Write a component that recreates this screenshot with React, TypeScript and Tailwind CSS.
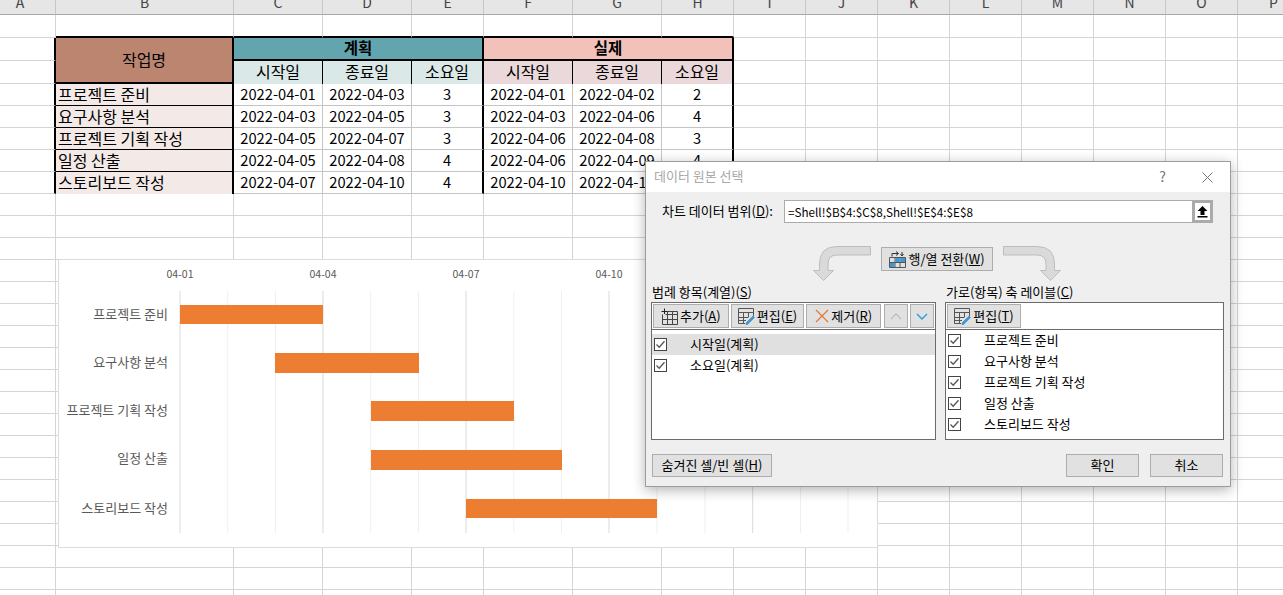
import type { ReactNode } from "react";

const columns = ["A", "B", "C", "D", "E", "F", "G", "H", "I", "J", "K", "L", "M", "N", "O", "P"];

const tasks = [
  { name: "프로젝트 준비", plan: ["2022-04-01", "2022-04-03", "3"], real: ["2022-04-01", "2022-04-02", "2"] },
  { name: "요구사항 분석", plan: ["2022-04-03", "2022-04-05", "3"], real: ["2022-04-03", "2022-04-06", "4"] },
  { name: "프로젝트 기획 작성", plan: ["2022-04-05", "2022-04-07", "3"], real: ["2022-04-06", "2022-04-08", "3"] },
  { name: "일정 산출", plan: ["2022-04-05", "2022-04-08", "4"], real: ["2022-04-06", "2022-04-09", "4"] },
  { name: "스토리보드 작성", plan: ["2022-04-07", "2022-04-10", "4"], real: ["2022-04-10", "2022-04-12", "4"] },
];

const bars = [
  { x: 180, w: 143, y: 305, h: 19, labelY: 319 },
  { x: 275, w: 144, y: 353, h: 20, labelY: 367 },
  { x: 371, w: 143, y: 401, h: 20, labelY: 415 },
  { x: 371, w: 191, y: 450, h: 20, labelY: 463 },
  { x: 466, w: 191, y: 499, h: 19, labelY: 513 },
];

const gridlines = [180, 227.7, 275.4, 323, 370.7, 418.4, 466, 513.8, 561.5, 609, 657, 705, 752.7, 800.5, 848];
const majorLines = [180, 323, 466, 609, 752.7];
const ticks = [
  { x: 180, label: "04-01" },
  { x: 323, label: "04-04" },
  { x: 466, label: "04-07" },
  { x: 609, label: "04-10" },
];

const blank = "border-r border-b border-[#d4d4d4]";
const inner = "border-r border-b border-[#c4c4c4] bg-white flex items-center justify-center text-[14.7px]";
const innerEnd = "border-r-2 border-r-black border-b border-b-[#c4c4c4] bg-white flex items-center justify-center text-[14.7px]";

function BlankCells({ count }: { count: number }) {
  return (
    <>
      {Array.from({ length: count }).map((_, i) => (
        <div key={i} className={blank} />
      ))}
    </>
  );
}

function SubHeader({ label, color, end }: { label: string; color: string; end?: boolean }) {
  return (
    <div
      className={`flex items-center justify-center pb-[4px] ${color} ${
        end ? "border-r-2 border-black" : "border-r border-black"
      }`}
    >
      {label}
    </div>
  );
}

function Sheet() {
  return (
    <div className="grid grid-cols-[56px_178px_89px_89px_72px_89px_89px_72px_72px_72px_72px_72px_72px_72px_72px_72px] grid-rows-[15px_23px_23px_23px_repeat(24,22px)] text-[16px] text-black">
      {columns.map((c, i) => (
        <div
          key={c}
          className={`overflow-hidden bg-[#e6e6e6] border-r border-r-[#c6c6c6] border-b border-b-[#a8a8a8] text-center text-[14px] leading-[14px] text-[#444] ${
            i === 0 ? "pr-[15px]" : ""
          }`}
        >
          <div className="-mt-[5px]">{c}</div>
        </div>
      ))}

      <div className={blank} />
      {columns.slice(1, 8).map((c) => (
        <div key={c} className="border-r border-r-[#d4d4d4] border-b-2 border-b-black" />
      ))}
      <BlankCells count={8} />

      <div className="border-b border-b-[#d4d4d4] border-r-2 border-r-black" />
      <div className="row-span-2 flex items-center justify-center border-r-2 border-b-2 border-black bg-[#bc8570] pb-[2px]">
        작업명
      </div>
      <div className="col-span-3 flex items-center justify-center border-r-2 border-b-2 border-black bg-[#62a5ae] pb-px text-[15.5px] font-bold">
        계획
      </div>
      <div className="col-span-3 flex items-center justify-center border-r-2 border-b-2 border-black bg-[#f2c2ba] pb-px text-[15.5px] font-bold">
        실제
      </div>
      <BlankCells count={8} />

      <div className="border-b border-b-[#d4d4d4] border-r-2 border-r-black" />
      <SubHeader label="시작일" color="bg-[#dae8e8]" />
      <SubHeader label="종료일" color="bg-[#dae8e8]" />
      <SubHeader label="소요일" color="bg-[#dae8e8]" end />
      <SubHeader label="시작일" color="bg-[#ead8da]" />
      <SubHeader label="종료일" color="bg-[#ead8da]" />
      <SubHeader label="소요일" color="bg-[#ead8da]" end />
      <BlankCells count={8} />

      {tasks.map((task, i) => (
        <div key={task.name} className="contents">
          <div className="border-b border-b-[#d4d4d4] border-r-2 border-r-black" />
          <div
            className={`flex items-center whitespace-nowrap border-r-2 border-r-black bg-[#f3eae7] pb-[2px] pl-[2px] ${
              i < tasks.length - 1 ? "border-b border-b-black" : ""
            }`}
          >
            {task.name}
          </div>
          <div className={inner}>{task.plan[0]}</div>
          <div className={inner}>{task.plan[1]}</div>
          <div className={innerEnd}>{task.plan[2]}</div>
          <div className={inner}>{task.real[0]}</div>
          <div className={inner}>{task.real[1]}</div>
          <div className={innerEnd}>{task.real[2]}</div>
          <BlankCells count={8} />
        </div>
      ))}

      <BlankCells count={16 * 19} />
    </div>
  );
}

function GanttChart() {
  return (
    <div className="absolute left-[58px] top-[259px] h-[289px] w-[820px] border border-[#dcdcdc] bg-white">
      <svg viewBox="59 260 818 287" width="818" height="287" className="block">
        {gridlines.map((x) => (
          <line
            key={x}
            x1={x}
            x2={x}
            y1={291}
            y2={533}
            stroke={majorLines.includes(x) ? "#d9d9d9" : "#efefef"}
            strokeWidth="1"
          />
        ))}
        {ticks.map((t) => (
          <text key={t.label} x={t.x} y={278} textAnchor="middle" fontSize="10.5" fill="#595959">
            {t.label}
          </text>
        ))}
        {bars.map((b, i) => (
          <g key={tasks[i].name}>
            <text x={168} y={b.labelY} textAnchor="end" fontSize="13" fill="#595959">
              {tasks[i].name}
            </text>
            <rect x={b.x} y={b.y} width={b.w} height={b.h} fill="#ed7d31" />
          </g>
        ))}
      </svg>
    </div>
  );
}

function BendArrow({ flip }: { flip?: boolean }) {
  return (
    <svg width="58" height="35" viewBox="0 0 58 35" className={flip ? "-scale-x-100" : ""}>
      <path
        d="M57.5 .5H24Q6.5 .5 6.5 18V24.5H.5L10.5 34.5L20.5 24.5H15V18Q15 9 24 9H57.5Z"
        fill="#d9dad9"
        stroke="#bdbdbd"
      />
    </svg>
  );
}

function TableAddIcon() {
  return (
    <svg width="17" height="17" viewBox="0 0 17 17" fill="none" stroke="#444">
      <path d="M4.5 3.5H16.5V16.5H1.5V6.5M1.5 11.5H16.5M6.5 3.5V16.5M11.5 3.5V16.5M4.5 6.5H16.5" />
      <path d="M3.5 .5V6M.5 3.5H6" stroke="#222" />
    </svg>
  );
}

function TableEditIcon() {
  return (
    <svg width="17" height="17" viewBox="0 0 17 17" fill="none">
      <path d="M.5 .5H15.5V8M.5 .5V15.5H7M.5 4.5H15.5M.5 9.5H10M.5 12.5H8M5.5 4.5V15.5M10.5 4.5V9.5" stroke="#555" />
      <path d="M8 15L15 8L16.5 9.5L9.5 16.5H8Z" fill="#3b9ad6" stroke="#2b86c4" strokeWidth=".6" />
    </svg>
  );
}

function SwapIcon() {
  return (
    <svg width="17" height="17" viewBox="0 0 17 17" fill="none">
      <path d="M.5 6.5H16.5V16.5H.5ZM.5 11.5H16.5M6 6.5V16.5M11 6.5V16.5" stroke="#555" />
      <rect x="6.5" y="7" width="4" height="4" fill="#3b9ad6" />
      <rect x="11.5" y="7" width="4.5" height="4" fill="#3b9ad6" />
      <rect x="1" y="12" width="4.5" height="4" fill="#3b9ad6" />
      <path d="M3 5.5V2.5H9M7 .5L9.5 2.5L7 4.5M13 1V4.5M11.5 3L13 5L14.5 3" stroke="#333" />
    </svg>
  );
}

function ToolButton({ width, children }: { width: string; children: ReactNode }) {
  return (
    <div className={`flex h-[24px] items-center justify-center gap-[2px] border border-[#adadad] bg-[#e1e1e1] ${width}`}>
      {children}
    </div>
  );
}

function CheckRow({ label, selected }: { label: string; selected?: boolean }) {
  return (
    <div className={`flex h-[21px] items-center pl-[2px] ${selected ? "bg-[#e0e0e0]" : ""}`}>
      <div className="h-[13px] w-[13px] border border-[#444] bg-white">
        <svg width="11" height="11" viewBox="0 0 11 11" fill="none" stroke="#555" strokeWidth="1.3">
          <path d="M1.5 5.5L4.2 8.2L9.5 2.2" />
        </svg>
      </div>
      <span className="pb-[2px] pl-[23px]">{label}</span>
    </div>
  );
}

function DataSourceDialog() {
  return (
    <div className="absolute left-[645px] top-[161px] flex h-[326px] w-[586px] flex-col border border-[#9c9c9c] bg-[#efefef] text-[13px] text-black shadow-[0_3px_12px_rgba(0,0,0,0.3)]">
      <div className="flex h-[30px] items-center justify-between bg-white pl-[8px] pr-[17px]">
        <span className="pb-[2px] text-[#a8a8a8]">데이터 원본 선택</span>
        <div className="flex items-center gap-[36px]">
          <span className="pb-[2px] text-[14px] text-[#777]">?</span>
          <svg width="11" height="11" viewBox="0 0 11 11" stroke="#777">
            <path d="M.5 .5L10.5 10.5M10.5 .5L.5 10.5" />
          </svg>
        </div>
      </div>

      <div className="mt-[8px] flex items-center pl-[16px]">
        <span className="w-[122px] pb-[2px]">
          차트 데이터 범위(<u>D</u>):
        </span>
        <div className="flex h-[23px] w-[429px] items-center border border-[#ababab] bg-white pl-[3px]">
          <span className="flex-1 text-[11.7px]">=Shell!$B$4:$C$8,Shell!$E$4:$E$8</span>
          <div className="-mr-px flex h-[23px] w-[21px] items-center justify-center border-[3px] border-[#ababab] bg-white">
            <svg width="11" height="12" viewBox="0 0 11 12">
              <path d="M5.5 0L10.5 5H7.5V9H3.5V5H.5ZM.5 10H10.5V11.5H.5Z" fill="#000" />
            </svg>
          </div>
        </div>
      </div>

      <div className="mt-[23px] flex items-start gap-[10px] pl-[167px]">
        <BendArrow />
        <div className="mt-px flex h-[24px] w-[112px] items-center justify-center gap-[2px] border border-[#adadad] bg-[#e1e1e1]">
          <SwapIcon />
          <span className="whitespace-nowrap pb-px">
            행/열 전환(<u>W</u>)
          </span>
        </div>
        <BendArrow flip />
      </div>

      <div className="mt-[3px] flex gap-[9px] pl-[5px]">
        <div className="w-[285px]">
          <div className="h-[18px] pl-px leading-[16px]">
            범례 항목(계열)(<u>S</u>)
          </div>
          <div className="h-[138px] border border-[#6b6b6b] bg-white">
            <div className="flex h-[27px] gap-[2px] border-b border-[#6b6b6b] p-px">
              <ToolButton width="w-[76px]">
                <TableAddIcon />
                <span className="pb-px">
                  추가(<u>A</u>)
                </span>
              </ToolButton>
              <ToolButton width="w-[74px]">
                <TableEditIcon />
                <span className="pb-px">
                  편집(<u>E</u>)
                </span>
              </ToolButton>
              <ToolButton width="w-[75px]">
                <svg width="14" height="14" viewBox="0 0 14 14" stroke="#e0783c" strokeWidth="1.2">
                  <path d="M1 1L13 13M13 1L1 13" />
                </svg>
                <span className="pb-px">
                  제거(<u>R</u>)
                </span>
              </ToolButton>
              <div className="ml-px">
                <ToolButton width="w-[24px]">
                  <svg width="12" height="7" viewBox="0 0 12 7" fill="none" stroke="#bdbdbd" strokeWidth="1.4">
                    <path d="M1 6L6 1L11 6" />
                  </svg>
                </ToolButton>
              </div>
              <ToolButton width="w-[24px]">
                <svg width="12" height="7" viewBox="0 0 12 7" fill="none" stroke="#2e9bd6" strokeWidth="1.4">
                  <path d="M1 1L6 6L11 1" />
                </svg>
              </ToolButton>
            </div>
            <div className="pt-[4px]">
              <CheckRow label="시작일(계획)" selected />
              <CheckRow label="소요일(계획)" />
            </div>
          </div>
        </div>

        <div className="w-[279px]">
          <div className="h-[18px] pl-px leading-[16px]">
            가로(항목) 축 레이블(<u>C</u>)
          </div>
          <div className="h-[138px] border border-[#6b6b6b] bg-white">
            <div className="flex h-[27px] border-b border-[#6b6b6b] p-px">
              <ToolButton width="w-[74px]">
                <TableEditIcon />
                <span className="pb-px">
                  편집(<u>T</u>)
                </span>
              </ToolButton>
            </div>
            {tasks.map((task) => (
              <CheckRow key={task.name} label={task.name} />
            ))}
          </div>
        </div>
      </div>

      <div className="mt-[14px] flex justify-between pl-[6px] pr-[7px]">
        <div className="flex h-[23px] w-[120px] items-center justify-center border border-[#adadad] bg-[#e1e1e1]">
          <span className="whitespace-nowrap pb-px">
            숨겨진 셀/빈 셀(<u>H</u>)
          </span>
        </div>
        <div className="flex gap-[11px]">
          <div className="flex h-[23px] w-[73px] items-center justify-center border border-[#adadad] bg-[#e1e1e1] pb-px">확인</div>
          <div className="flex h-[23px] w-[73px] items-center justify-center border border-[#adadad] bg-[#e1e1e1] pb-px">취소</div>
        </div>
      </div>
    </div>
  );
}

export default function App() {
  return (
    <div className="relative h-[595px] w-[1283px] overflow-hidden bg-white font-['Noto_Sans_CJK_KR','Noto_Sans',sans-serif]">
      <Sheet />
      <GanttChart />
      <DataSourceDialog />
    </div>
  );
}
